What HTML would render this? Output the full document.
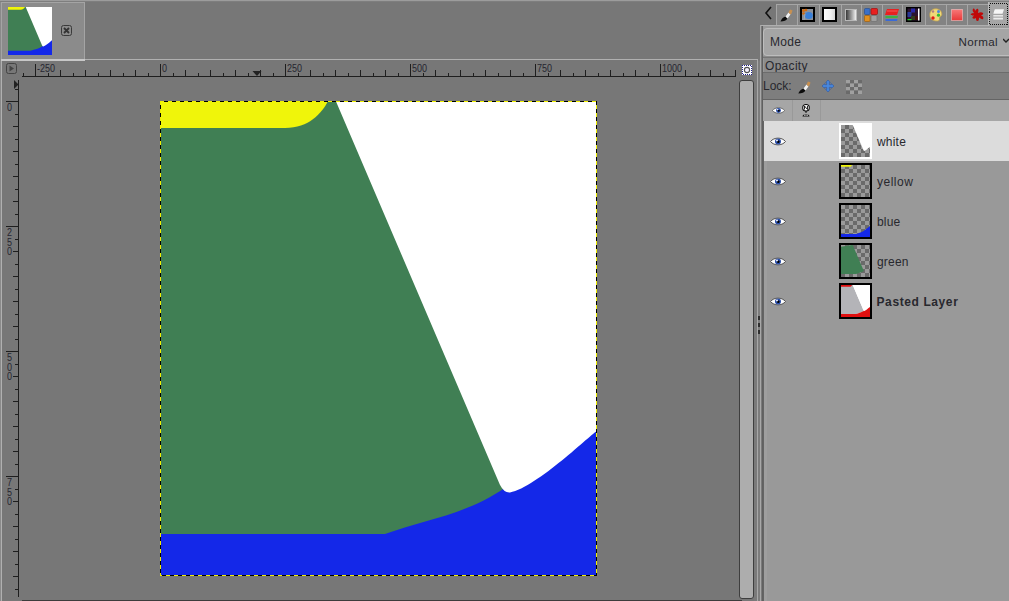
<!DOCTYPE html>
<html><head><meta charset="utf-8">
<style>
*{margin:0;padding:0;box-sizing:border-box}
html,body{width:1009px;height:601px;overflow:hidden;background:#777;font-family:"Liberation Sans",sans-serif}
.a{position:absolute}
.t{position:absolute;color:#28282e;white-space:nowrap;font-size:12px;line-height:14px}
.d{letter-spacing:0.3px}
</style></head><body>
<div class="a" style="left:0;top:0;width:754px;height:1px;background:#9c9c9c"></div>
<div class="a" style="left:0;top:1px;width:754px;height:1px;background:#7e7e7e"></div>
<div class="a" style="left:1px;top:2px;width:84px;height:58px;background:#8b8b8b;border:1px solid #a4a4a4;border-bottom:none"></div>
<div class="a" style="left:1px;top:59px;width:757px;height:1px;background:#b0b0b0"></div>
<div class="a" style="left:1px;top:59px;width:84px;height:2px;background:#c8c8c8"></div>
<div class="a" style="left:0;top:2px;width:1px;height:599px;background:#8a8a8a"></div>
<div class="a" style="left:1px;top:59px;width:1px;height:542px;background:#b0b0b0"></div>
<svg class="a" style="left:8px;top:7px" width="44" height="48" viewBox="0 0 437 475" preserveAspectRatio="none">
<rect width="437" height="475" fill="#407f54"/>
<path d="M0,0 L168,0 C162,12.1 148.9,27 125,27 L0,27 Z" fill="#f0f50a"/>
<path d="M0,433 L225,433 C263.6,419.1 307.7,413.3 346,386 L437,300 L437,475 L0,475 Z" fill="#1428e8"/>
<path d="M175.8,0 L339.9,383.8 Q344,392 350,391.5 C377.3,386.1 432.3,331.8 437,330 L437,0 Z" fill="#fff"/>
</svg>
<svg class="a" style="left:61px;top:25px" width="11" height="11" viewBox="0 0 11 11">
<rect x="0.5" y="0.5" width="10" height="10" rx="2" fill="none" stroke="#3a3a3a" stroke-width="1"/>
<path d="M3,3 L8,8 M8,3 L3,8" stroke="#333" stroke-width="1.8"/></svg>
<svg class="a" style="left:6px;top:63px" width="11" height="11" viewBox="0 0 11 11">
<rect x="0.5" y="0.5" width="10" height="10" rx="2" fill="none" stroke="#444" stroke-width="1"/>
<path d="M3.5,2.5 L8,5.5 L3.5,8.5 Z" fill="#444"/></svg>
<svg class="a" style="left:0;top:0" width="760" height="90" shape-rendering="crispEdges"><rect x="22" y="76" width="714" height="1" fill="#1e1e1e"/><rect x="23" y="73" width="1" height="3" fill="#1e1e1e"/><rect x="35" y="64" width="1" height="12" fill="#1e1e1e"/><rect x="48" y="73" width="1" height="3" fill="#1e1e1e"/><rect x="60" y="70" width="1" height="6" fill="#1e1e1e"/><rect x="73" y="73" width="1" height="3" fill="#1e1e1e"/><rect x="85" y="70" width="1" height="6" fill="#1e1e1e"/><rect x="98" y="73" width="1" height="3" fill="#1e1e1e"/><rect x="110" y="70" width="1" height="6" fill="#1e1e1e"/><rect x="123" y="73" width="1" height="3" fill="#1e1e1e"/><rect x="135" y="70" width="1" height="6" fill="#1e1e1e"/><rect x="148" y="73" width="1" height="3" fill="#1e1e1e"/><rect x="160" y="64" width="1" height="12" fill="#1e1e1e"/><rect x="173" y="73" width="1" height="3" fill="#1e1e1e"/><rect x="185" y="70" width="1" height="6" fill="#1e1e1e"/><rect x="198" y="73" width="1" height="3" fill="#1e1e1e"/><rect x="210" y="70" width="1" height="6" fill="#1e1e1e"/><rect x="223" y="73" width="1" height="3" fill="#1e1e1e"/><rect x="235" y="70" width="1" height="6" fill="#1e1e1e"/><rect x="248" y="73" width="1" height="3" fill="#1e1e1e"/><rect x="260" y="70" width="1" height="6" fill="#1e1e1e"/><rect x="273" y="73" width="1" height="3" fill="#1e1e1e"/><rect x="285" y="64" width="1" height="12" fill="#1e1e1e"/><rect x="298" y="73" width="1" height="3" fill="#1e1e1e"/><rect x="310" y="70" width="1" height="6" fill="#1e1e1e"/><rect x="323" y="73" width="1" height="3" fill="#1e1e1e"/><rect x="335" y="70" width="1" height="6" fill="#1e1e1e"/><rect x="348" y="73" width="1" height="3" fill="#1e1e1e"/><rect x="360" y="70" width="1" height="6" fill="#1e1e1e"/><rect x="373" y="73" width="1" height="3" fill="#1e1e1e"/><rect x="385" y="70" width="1" height="6" fill="#1e1e1e"/><rect x="398" y="73" width="1" height="3" fill="#1e1e1e"/><rect x="410" y="64" width="1" height="12" fill="#1e1e1e"/><rect x="423" y="73" width="1" height="3" fill="#1e1e1e"/><rect x="435" y="70" width="1" height="6" fill="#1e1e1e"/><rect x="448" y="73" width="1" height="3" fill="#1e1e1e"/><rect x="460" y="70" width="1" height="6" fill="#1e1e1e"/><rect x="473" y="73" width="1" height="3" fill="#1e1e1e"/><rect x="485" y="70" width="1" height="6" fill="#1e1e1e"/><rect x="498" y="73" width="1" height="3" fill="#1e1e1e"/><rect x="510" y="70" width="1" height="6" fill="#1e1e1e"/><rect x="523" y="73" width="1" height="3" fill="#1e1e1e"/><rect x="535" y="64" width="1" height="12" fill="#1e1e1e"/><rect x="548" y="73" width="1" height="3" fill="#1e1e1e"/><rect x="560" y="70" width="1" height="6" fill="#1e1e1e"/><rect x="573" y="73" width="1" height="3" fill="#1e1e1e"/><rect x="585" y="70" width="1" height="6" fill="#1e1e1e"/><rect x="598" y="73" width="1" height="3" fill="#1e1e1e"/><rect x="610" y="70" width="1" height="6" fill="#1e1e1e"/><rect x="623" y="73" width="1" height="3" fill="#1e1e1e"/><rect x="635" y="70" width="1" height="6" fill="#1e1e1e"/><rect x="648" y="73" width="1" height="3" fill="#1e1e1e"/><rect x="660" y="64" width="1" height="12" fill="#1e1e1e"/><rect x="673" y="73" width="1" height="3" fill="#1e1e1e"/><rect x="685" y="70" width="1" height="6" fill="#1e1e1e"/><rect x="698" y="73" width="1" height="3" fill="#1e1e1e"/><rect x="710" y="70" width="1" height="6" fill="#1e1e1e"/><rect x="723" y="73" width="1" height="3" fill="#1e1e1e"/><rect x="735" y="70" width="1" height="6" fill="#1e1e1e"/><rect x="735" y="71" width="1" height="5" fill="#1e1e1e"/><path d="M252.5,71 L261.5,71 L257,76 Z" fill="#222" shape-rendering="auto"/></svg>
<div class="t" style="left:37px;top:63px;font-size:10px;line-height:12px;transform:scaleX(0.9);transform-origin:0 0;color:#262630">-250</div>
<div class="t" style="left:162px;top:63px;font-size:10px;line-height:12px;transform:scaleX(0.9);transform-origin:0 0;color:#262630">0</div>
<div class="t" style="left:287px;top:63px;font-size:10px;line-height:12px;transform:scaleX(0.9);transform-origin:0 0;color:#262630">250</div>
<div class="t" style="left:412px;top:63px;font-size:10px;line-height:12px;transform:scaleX(0.9);transform-origin:0 0;color:#262630">500</div>
<div class="t" style="left:537px;top:63px;font-size:10px;line-height:12px;transform:scaleX(0.9);transform-origin:0 0;color:#262630">750</div>
<div class="t" style="left:662px;top:63px;font-size:10px;line-height:12px;transform:scaleX(0.9);transform-origin:0 0;color:#262630">1000</div>
<svg class="a" style="left:0;top:0" width="22" height="601" shape-rendering="crispEdges"><rect x="18" y="80" width="1" height="517" fill="#1e1e1e"/><rect x="15" y="89" width="3" height="1" fill="#1e1e1e"/><rect x="6" y="101" width="12" height="1" fill="#1e1e1e"/><rect x="15" y="114" width="3" height="1" fill="#1e1e1e"/><rect x="13" y="126" width="5" height="1" fill="#1e1e1e"/><rect x="15" y="139" width="3" height="1" fill="#1e1e1e"/><rect x="13" y="151" width="5" height="1" fill="#1e1e1e"/><rect x="15" y="164" width="3" height="1" fill="#1e1e1e"/><rect x="13" y="176" width="5" height="1" fill="#1e1e1e"/><rect x="15" y="189" width="3" height="1" fill="#1e1e1e"/><rect x="13" y="201" width="5" height="1" fill="#1e1e1e"/><rect x="15" y="214" width="3" height="1" fill="#1e1e1e"/><rect x="6" y="226" width="12" height="1" fill="#1e1e1e"/><rect x="15" y="239" width="3" height="1" fill="#1e1e1e"/><rect x="13" y="251" width="5" height="1" fill="#1e1e1e"/><rect x="15" y="264" width="3" height="1" fill="#1e1e1e"/><rect x="13" y="276" width="5" height="1" fill="#1e1e1e"/><rect x="15" y="289" width="3" height="1" fill="#1e1e1e"/><rect x="13" y="301" width="5" height="1" fill="#1e1e1e"/><rect x="15" y="314" width="3" height="1" fill="#1e1e1e"/><rect x="13" y="326" width="5" height="1" fill="#1e1e1e"/><rect x="15" y="339" width="3" height="1" fill="#1e1e1e"/><rect x="6" y="351" width="12" height="1" fill="#1e1e1e"/><rect x="15" y="364" width="3" height="1" fill="#1e1e1e"/><rect x="13" y="376" width="5" height="1" fill="#1e1e1e"/><rect x="15" y="389" width="3" height="1" fill="#1e1e1e"/><rect x="13" y="401" width="5" height="1" fill="#1e1e1e"/><rect x="15" y="414" width="3" height="1" fill="#1e1e1e"/><rect x="13" y="426" width="5" height="1" fill="#1e1e1e"/><rect x="15" y="439" width="3" height="1" fill="#1e1e1e"/><rect x="13" y="451" width="5" height="1" fill="#1e1e1e"/><rect x="15" y="464" width="3" height="1" fill="#1e1e1e"/><rect x="6" y="476" width="12" height="1" fill="#1e1e1e"/><rect x="15" y="489" width="3" height="1" fill="#1e1e1e"/><rect x="13" y="501" width="5" height="1" fill="#1e1e1e"/><rect x="15" y="514" width="3" height="1" fill="#1e1e1e"/><rect x="13" y="526" width="5" height="1" fill="#1e1e1e"/><rect x="15" y="539" width="3" height="1" fill="#1e1e1e"/><rect x="13" y="551" width="5" height="1" fill="#1e1e1e"/><rect x="15" y="564" width="3" height="1" fill="#1e1e1e"/><rect x="13" y="576" width="5" height="1" fill="#1e1e1e"/><rect x="15" y="589" width="3" height="1" fill="#1e1e1e"/><path d="M14,80 L18.5,84.5 L14,89 Z" fill="#222" shape-rendering="auto"/></svg>
<div class="t" style="left:7px;top:102.0px;font-size:10px;line-height:12px;transform:scaleX(0.9);transform-origin:0 0;color:#262630">0</div>
<div class="t" style="left:7px;top:227.0px;font-size:10px;line-height:12px;transform:scaleX(0.9);transform-origin:0 0;color:#262630">2</div>
<div class="t" style="left:7px;top:236.5px;font-size:10px;line-height:12px;transform:scaleX(0.9);transform-origin:0 0;color:#262630">5</div>
<div class="t" style="left:7px;top:246.0px;font-size:10px;line-height:12px;transform:scaleX(0.9);transform-origin:0 0;color:#262630">0</div>
<div class="t" style="left:7px;top:352.0px;font-size:10px;line-height:12px;transform:scaleX(0.9);transform-origin:0 0;color:#262630">5</div>
<div class="t" style="left:7px;top:361.5px;font-size:10px;line-height:12px;transform:scaleX(0.9);transform-origin:0 0;color:#262630">0</div>
<div class="t" style="left:7px;top:371.0px;font-size:10px;line-height:12px;transform:scaleX(0.9);transform-origin:0 0;color:#262630">0</div>
<div class="t" style="left:7px;top:477.0px;font-size:10px;line-height:12px;transform:scaleX(0.9);transform-origin:0 0;color:#262630">7</div>
<div class="t" style="left:7px;top:486.5px;font-size:10px;line-height:12px;transform:scaleX(0.9);transform-origin:0 0;color:#262630">5</div>
<div class="t" style="left:7px;top:496.0px;font-size:10px;line-height:12px;transform:scaleX(0.9);transform-origin:0 0;color:#262630">0</div>
<svg class="a" style="left:160px;top:101px" width="437" height="475" viewBox="0 0 437 475">
<rect width="437" height="475" fill="#407f54"/>
<path d="M0,0 L168,0 C162,12.1 148.9,27 125,27 L0,27 Z" fill="#f0f50a"/>
<path d="M0,433 L225,433 C263.6,419.1 307.7,413.3 346,386 L437,300 L437,475 L0,475 Z" fill="#1428e8"/>
<path d="M175.8,0 L339.9,383.8 Q344,392 350,391.5 C377.3,386.1 432.3,331.8 437,330 L437,0 Z" fill="#fff"/>
<g shape-rendering="crispEdges"><rect x="0" y="0" width="437" height="1" fill="#f0f000"/><rect x="0" y="474" width="437" height="1" fill="#f0f000"/><rect x="0" y="0" width="1" height="475" fill="#f0f000"/><rect x="436" y="0" width="1" height="475" fill="#f0f000"/><rect x="4" y="0" width="4" height="1" fill="#000"/><rect x="12" y="0" width="4" height="1" fill="#000"/><rect x="20" y="0" width="4" height="1" fill="#000"/><rect x="28" y="0" width="4" height="1" fill="#000"/><rect x="36" y="0" width="4" height="1" fill="#000"/><rect x="44" y="0" width="4" height="1" fill="#000"/><rect x="52" y="0" width="4" height="1" fill="#000"/><rect x="60" y="0" width="4" height="1" fill="#000"/><rect x="68" y="0" width="4" height="1" fill="#000"/><rect x="76" y="0" width="4" height="1" fill="#000"/><rect x="84" y="0" width="4" height="1" fill="#000"/><rect x="92" y="0" width="4" height="1" fill="#000"/><rect x="100" y="0" width="4" height="1" fill="#000"/><rect x="108" y="0" width="4" height="1" fill="#000"/><rect x="116" y="0" width="4" height="1" fill="#000"/><rect x="124" y="0" width="4" height="1" fill="#000"/><rect x="132" y="0" width="4" height="1" fill="#000"/><rect x="140" y="0" width="4" height="1" fill="#000"/><rect x="148" y="0" width="4" height="1" fill="#000"/><rect x="156" y="0" width="4" height="1" fill="#000"/><rect x="164" y="0" width="4" height="1" fill="#000"/><rect x="172" y="0" width="4" height="1" fill="#000"/><rect x="180" y="0" width="4" height="1" fill="#000"/><rect x="188" y="0" width="4" height="1" fill="#000"/><rect x="196" y="0" width="4" height="1" fill="#000"/><rect x="204" y="0" width="4" height="1" fill="#000"/><rect x="212" y="0" width="4" height="1" fill="#000"/><rect x="220" y="0" width="4" height="1" fill="#000"/><rect x="228" y="0" width="4" height="1" fill="#000"/><rect x="236" y="0" width="4" height="1" fill="#000"/><rect x="244" y="0" width="4" height="1" fill="#000"/><rect x="252" y="0" width="4" height="1" fill="#000"/><rect x="260" y="0" width="4" height="1" fill="#000"/><rect x="268" y="0" width="4" height="1" fill="#000"/><rect x="276" y="0" width="4" height="1" fill="#000"/><rect x="284" y="0" width="4" height="1" fill="#000"/><rect x="292" y="0" width="4" height="1" fill="#000"/><rect x="300" y="0" width="4" height="1" fill="#000"/><rect x="308" y="0" width="4" height="1" fill="#000"/><rect x="316" y="0" width="4" height="1" fill="#000"/><rect x="324" y="0" width="4" height="1" fill="#000"/><rect x="332" y="0" width="4" height="1" fill="#000"/><rect x="340" y="0" width="4" height="1" fill="#000"/><rect x="348" y="0" width="4" height="1" fill="#000"/><rect x="356" y="0" width="4" height="1" fill="#000"/><rect x="364" y="0" width="4" height="1" fill="#000"/><rect x="372" y="0" width="4" height="1" fill="#000"/><rect x="380" y="0" width="4" height="1" fill="#000"/><rect x="388" y="0" width="4" height="1" fill="#000"/><rect x="396" y="0" width="4" height="1" fill="#000"/><rect x="404" y="0" width="4" height="1" fill="#000"/><rect x="412" y="0" width="4" height="1" fill="#000"/><rect x="420" y="0" width="4" height="1" fill="#000"/><rect x="428" y="0" width="4" height="1" fill="#000"/><rect x="436" y="0" width="1" height="1" fill="#000"/><rect x="2" y="474" width="4" height="1" fill="#000"/><rect x="10" y="474" width="4" height="1" fill="#000"/><rect x="18" y="474" width="4" height="1" fill="#000"/><rect x="26" y="474" width="4" height="1" fill="#000"/><rect x="34" y="474" width="4" height="1" fill="#000"/><rect x="42" y="474" width="4" height="1" fill="#000"/><rect x="50" y="474" width="4" height="1" fill="#000"/><rect x="58" y="474" width="4" height="1" fill="#000"/><rect x="66" y="474" width="4" height="1" fill="#000"/><rect x="74" y="474" width="4" height="1" fill="#000"/><rect x="82" y="474" width="4" height="1" fill="#000"/><rect x="90" y="474" width="4" height="1" fill="#000"/><rect x="98" y="474" width="4" height="1" fill="#000"/><rect x="106" y="474" width="4" height="1" fill="#000"/><rect x="114" y="474" width="4" height="1" fill="#000"/><rect x="122" y="474" width="4" height="1" fill="#000"/><rect x="130" y="474" width="4" height="1" fill="#000"/><rect x="138" y="474" width="4" height="1" fill="#000"/><rect x="146" y="474" width="4" height="1" fill="#000"/><rect x="154" y="474" width="4" height="1" fill="#000"/><rect x="162" y="474" width="4" height="1" fill="#000"/><rect x="170" y="474" width="4" height="1" fill="#000"/><rect x="178" y="474" width="4" height="1" fill="#000"/><rect x="186" y="474" width="4" height="1" fill="#000"/><rect x="194" y="474" width="4" height="1" fill="#000"/><rect x="202" y="474" width="4" height="1" fill="#000"/><rect x="210" y="474" width="4" height="1" fill="#000"/><rect x="218" y="474" width="4" height="1" fill="#000"/><rect x="226" y="474" width="4" height="1" fill="#000"/><rect x="234" y="474" width="4" height="1" fill="#000"/><rect x="242" y="474" width="4" height="1" fill="#000"/><rect x="250" y="474" width="4" height="1" fill="#000"/><rect x="258" y="474" width="4" height="1" fill="#000"/><rect x="266" y="474" width="4" height="1" fill="#000"/><rect x="274" y="474" width="4" height="1" fill="#000"/><rect x="282" y="474" width="4" height="1" fill="#000"/><rect x="290" y="474" width="4" height="1" fill="#000"/><rect x="298" y="474" width="4" height="1" fill="#000"/><rect x="306" y="474" width="4" height="1" fill="#000"/><rect x="314" y="474" width="4" height="1" fill="#000"/><rect x="322" y="474" width="4" height="1" fill="#000"/><rect x="330" y="474" width="4" height="1" fill="#000"/><rect x="338" y="474" width="4" height="1" fill="#000"/><rect x="346" y="474" width="4" height="1" fill="#000"/><rect x="354" y="474" width="4" height="1" fill="#000"/><rect x="362" y="474" width="4" height="1" fill="#000"/><rect x="370" y="474" width="4" height="1" fill="#000"/><rect x="378" y="474" width="4" height="1" fill="#000"/><rect x="386" y="474" width="4" height="1" fill="#000"/><rect x="394" y="474" width="4" height="1" fill="#000"/><rect x="402" y="474" width="4" height="1" fill="#000"/><rect x="410" y="474" width="4" height="1" fill="#000"/><rect x="418" y="474" width="4" height="1" fill="#000"/><rect x="426" y="474" width="4" height="1" fill="#000"/><rect x="434" y="474" width="3" height="1" fill="#000"/><rect x="0" y="4" width="1" height="4" fill="#000"/><rect x="0" y="12" width="1" height="4" fill="#000"/><rect x="0" y="20" width="1" height="4" fill="#000"/><rect x="0" y="28" width="1" height="4" fill="#000"/><rect x="0" y="36" width="1" height="4" fill="#000"/><rect x="0" y="44" width="1" height="4" fill="#000"/><rect x="0" y="52" width="1" height="4" fill="#000"/><rect x="0" y="60" width="1" height="4" fill="#000"/><rect x="0" y="68" width="1" height="4" fill="#000"/><rect x="0" y="76" width="1" height="4" fill="#000"/><rect x="0" y="84" width="1" height="4" fill="#000"/><rect x="0" y="92" width="1" height="4" fill="#000"/><rect x="0" y="100" width="1" height="4" fill="#000"/><rect x="0" y="108" width="1" height="4" fill="#000"/><rect x="0" y="116" width="1" height="4" fill="#000"/><rect x="0" y="124" width="1" height="4" fill="#000"/><rect x="0" y="132" width="1" height="4" fill="#000"/><rect x="0" y="140" width="1" height="4" fill="#000"/><rect x="0" y="148" width="1" height="4" fill="#000"/><rect x="0" y="156" width="1" height="4" fill="#000"/><rect x="0" y="164" width="1" height="4" fill="#000"/><rect x="0" y="172" width="1" height="4" fill="#000"/><rect x="0" y="180" width="1" height="4" fill="#000"/><rect x="0" y="188" width="1" height="4" fill="#000"/><rect x="0" y="196" width="1" height="4" fill="#000"/><rect x="0" y="204" width="1" height="4" fill="#000"/><rect x="0" y="212" width="1" height="4" fill="#000"/><rect x="0" y="220" width="1" height="4" fill="#000"/><rect x="0" y="228" width="1" height="4" fill="#000"/><rect x="0" y="236" width="1" height="4" fill="#000"/><rect x="0" y="244" width="1" height="4" fill="#000"/><rect x="0" y="252" width="1" height="4" fill="#000"/><rect x="0" y="260" width="1" height="4" fill="#000"/><rect x="0" y="268" width="1" height="4" fill="#000"/><rect x="0" y="276" width="1" height="4" fill="#000"/><rect x="0" y="284" width="1" height="4" fill="#000"/><rect x="0" y="292" width="1" height="4" fill="#000"/><rect x="0" y="300" width="1" height="4" fill="#000"/><rect x="0" y="308" width="1" height="4" fill="#000"/><rect x="0" y="316" width="1" height="4" fill="#000"/><rect x="0" y="324" width="1" height="4" fill="#000"/><rect x="0" y="332" width="1" height="4" fill="#000"/><rect x="0" y="340" width="1" height="4" fill="#000"/><rect x="0" y="348" width="1" height="4" fill="#000"/><rect x="0" y="356" width="1" height="4" fill="#000"/><rect x="0" y="364" width="1" height="4" fill="#000"/><rect x="0" y="372" width="1" height="4" fill="#000"/><rect x="0" y="380" width="1" height="4" fill="#000"/><rect x="0" y="388" width="1" height="4" fill="#000"/><rect x="0" y="396" width="1" height="4" fill="#000"/><rect x="0" y="404" width="1" height="4" fill="#000"/><rect x="0" y="412" width="1" height="4" fill="#000"/><rect x="0" y="420" width="1" height="4" fill="#000"/><rect x="0" y="428" width="1" height="4" fill="#000"/><rect x="0" y="436" width="1" height="4" fill="#000"/><rect x="0" y="444" width="1" height="4" fill="#000"/><rect x="0" y="452" width="1" height="4" fill="#000"/><rect x="0" y="460" width="1" height="4" fill="#000"/><rect x="0" y="468" width="1" height="4" fill="#000"/><rect x="436" y="0" width="1" height="4" fill="#000"/><rect x="436" y="8" width="1" height="4" fill="#000"/><rect x="436" y="16" width="1" height="4" fill="#000"/><rect x="436" y="24" width="1" height="4" fill="#000"/><rect x="436" y="32" width="1" height="4" fill="#000"/><rect x="436" y="40" width="1" height="4" fill="#000"/><rect x="436" y="48" width="1" height="4" fill="#000"/><rect x="436" y="56" width="1" height="4" fill="#000"/><rect x="436" y="64" width="1" height="4" fill="#000"/><rect x="436" y="72" width="1" height="4" fill="#000"/><rect x="436" y="80" width="1" height="4" fill="#000"/><rect x="436" y="88" width="1" height="4" fill="#000"/><rect x="436" y="96" width="1" height="4" fill="#000"/><rect x="436" y="104" width="1" height="4" fill="#000"/><rect x="436" y="112" width="1" height="4" fill="#000"/><rect x="436" y="120" width="1" height="4" fill="#000"/><rect x="436" y="128" width="1" height="4" fill="#000"/><rect x="436" y="136" width="1" height="4" fill="#000"/><rect x="436" y="144" width="1" height="4" fill="#000"/><rect x="436" y="152" width="1" height="4" fill="#000"/><rect x="436" y="160" width="1" height="4" fill="#000"/><rect x="436" y="168" width="1" height="4" fill="#000"/><rect x="436" y="176" width="1" height="4" fill="#000"/><rect x="436" y="184" width="1" height="4" fill="#000"/><rect x="436" y="192" width="1" height="4" fill="#000"/><rect x="436" y="200" width="1" height="4" fill="#000"/><rect x="436" y="208" width="1" height="4" fill="#000"/><rect x="436" y="216" width="1" height="4" fill="#000"/><rect x="436" y="224" width="1" height="4" fill="#000"/><rect x="436" y="232" width="1" height="4" fill="#000"/><rect x="436" y="240" width="1" height="4" fill="#000"/><rect x="436" y="248" width="1" height="4" fill="#000"/><rect x="436" y="256" width="1" height="4" fill="#000"/><rect x="436" y="264" width="1" height="4" fill="#000"/><rect x="436" y="272" width="1" height="4" fill="#000"/><rect x="436" y="280" width="1" height="4" fill="#000"/><rect x="436" y="288" width="1" height="4" fill="#000"/><rect x="436" y="296" width="1" height="4" fill="#000"/><rect x="436" y="304" width="1" height="4" fill="#000"/><rect x="436" y="312" width="1" height="4" fill="#000"/><rect x="436" y="320" width="1" height="4" fill="#000"/><rect x="436" y="328" width="1" height="4" fill="#000"/><rect x="436" y="336" width="1" height="4" fill="#000"/><rect x="436" y="344" width="1" height="4" fill="#000"/><rect x="436" y="352" width="1" height="4" fill="#000"/><rect x="436" y="360" width="1" height="4" fill="#000"/><rect x="436" y="368" width="1" height="4" fill="#000"/><rect x="436" y="376" width="1" height="4" fill="#000"/><rect x="436" y="384" width="1" height="4" fill="#000"/><rect x="436" y="392" width="1" height="4" fill="#000"/><rect x="436" y="400" width="1" height="4" fill="#000"/><rect x="436" y="408" width="1" height="4" fill="#000"/><rect x="436" y="416" width="1" height="4" fill="#000"/><rect x="436" y="424" width="1" height="4" fill="#000"/><rect x="436" y="432" width="1" height="4" fill="#000"/><rect x="436" y="440" width="1" height="4" fill="#000"/><rect x="436" y="448" width="1" height="4" fill="#000"/><rect x="436" y="456" width="1" height="4" fill="#000"/><rect x="436" y="464" width="1" height="4" fill="#000"/><rect x="436" y="472" width="1" height="3" fill="#000"/></g></svg>
<div class="a" style="left:22px;top:600px;width:720px;height:1px;background:#3c3c3c"></div>
<div class="a" style="left:739px;top:80px;width:15px;height:519px;background:#adadad;border:1px solid #3e3e3e;border-radius:3px"></div>
<svg class="a" style="left:742px;top:65px" width="10" height="10" viewBox="0 0 10 10" shape-rendering="crispEdges"><rect width="10" height="10" fill="#fff"/><rect x="0" y="0" width="1" height="1" fill="#20208a"/><rect x="0" y="0" width="1" height="1" fill="#20208a"/><rect x="1" y="9" width="1" height="1" fill="#20208a"/><rect x="9" y="1" width="1" height="1" fill="#20208a"/><rect x="2" y="0" width="1" height="1" fill="#20208a"/><rect x="0" y="2" width="1" height="1" fill="#20208a"/><rect x="3" y="9" width="1" height="1" fill="#20208a"/><rect x="9" y="3" width="1" height="1" fill="#20208a"/><rect x="4" y="0" width="1" height="1" fill="#20208a"/><rect x="0" y="4" width="1" height="1" fill="#20208a"/><rect x="5" y="9" width="1" height="1" fill="#20208a"/><rect x="9" y="5" width="1" height="1" fill="#20208a"/><rect x="6" y="0" width="1" height="1" fill="#20208a"/><rect x="0" y="6" width="1" height="1" fill="#20208a"/><rect x="7" y="9" width="1" height="1" fill="#20208a"/><rect x="9" y="7" width="1" height="1" fill="#20208a"/><rect x="8" y="0" width="1" height="1" fill="#20208a"/><rect x="0" y="8" width="1" height="1" fill="#20208a"/><rect x="9" y="9" width="1" height="1" fill="#20208a"/><rect x="9" y="9" width="1" height="1" fill="#20208a"/></svg>
<svg class="a" style="left:742px;top:65px" width="10" height="10" viewBox="0 0 10 10"><circle cx="5" cy="5" r="2.6" fill="#f4f0ff" stroke="#505050" stroke-width="1.1"/></svg>
<div class="a" style="left:754px;top:61px;width:3px;height:540px;background:#7a7a7a"></div>
<div class="a" style="left:757px;top:59px;width:1px;height:542px;background:#a8a8a8"></div>
<div class="a" style="left:758px;top:61px;width:2px;height:540px;background:#7c7c7c"></div>
<div class="a" style="left:760px;top:25px;width:1px;height:576px;background:#a8a8a8"></div>
<div class="a" style="left:761px;top:26px;width:2px;height:575px;background:#7a7a7a"></div>
<div class="a" style="left:758px;top:316px;width:2px;height:4px;background:#2e2e2e"></div>
<div class="a" style="left:758px;top:323px;width:2px;height:4px;background:#2e2e2e"></div>
<div class="a" style="left:758px;top:330px;width:2px;height:4px;background:#2e2e2e"></div>
<div class="a" style="left:1px;top:59px;width:757px;height:1px;background:#b0b0b0"></div>
<div class="a" style="left:1px;top:59px;width:84px;height:2px;background:#c8c8c8"></div>
<div class="a" style="left:763px;top:0;width:246px;height:601px;background:#999"></div>
<div class="a" style="left:754px;top:0;width:255px;height:25px;background:#777"></div>
<div class="a" style="left:754px;top:0;width:255px;height:1px;background:#9c9c9c"></div>
<div class="a" style="left:754px;top:1px;width:255px;height:1px;background:#7e7e7e"></div>
<div class="a" style="left:776px;top:4px;width:233px;height:21px;background:#838383"></div>
<div class="a" style="left:760px;top:25px;width:249px;height:1px;background:#b0b0b0"></div>
<div class="a" style="left:761px;top:26px;width:2px;height:575px;background:#7a7a7a"></div>
<div class="a" style="left:762px;top:26px;width:1px;height:575px;background:#606060"></div>
<div class="a" style="left:763px;top:121px;width:1px;height:480px;background:#646464"></div>
<div class="a" style="left:764px;top:161px;width:3px;height:440px;background:#9e9e9e"></div>
<div class="a" style="left:760px;top:25px;width:1px;height:576px;background:#a8a8a8"></div>
<div class="a" style="left:776px;top:4px;width:1px;height:21px;background:#a6a6a6"></div>
<div class="a" style="left:797px;top:4px;width:1px;height:21px;background:#a6a6a6"></div>
<div class="a" style="left:819px;top:4px;width:1px;height:21px;background:#a6a6a6"></div>
<div class="a" style="left:841px;top:4px;width:1px;height:21px;background:#a6a6a6"></div>
<div class="a" style="left:861px;top:4px;width:1px;height:21px;background:#a6a6a6"></div>
<div class="a" style="left:882px;top:4px;width:1px;height:21px;background:#a6a6a6"></div>
<div class="a" style="left:902px;top:4px;width:1px;height:21px;background:#a6a6a6"></div>
<div class="a" style="left:925px;top:4px;width:1px;height:21px;background:#a6a6a6"></div>
<div class="a" style="left:946px;top:4px;width:1px;height:21px;background:#a6a6a6"></div>
<div class="a" style="left:967px;top:4px;width:1px;height:21px;background:#a6a6a6"></div>
<div class="a" style="left:988px;top:4px;width:1px;height:21px;background:#a6a6a6"></div>
<div class="a" style="left:776px;top:4px;width:233px;height:1px;background:#a6a6a6"></div>
<div class="a" style="left:988px;top:2px;width:21px;height:24px;background:#a6a6a6;border-left:1px solid #bcbcbc"></div>
<svg class="a" style="left:989px;top:3px" width="19" height="22" viewBox="0 0 19 22" shape-rendering="crispEdges"><rect x="0.5" y="0.5" width="18" height="21" fill="none" stroke="#111" stroke-dasharray="1 1"/></svg>
<svg class="a" style="left:764px;top:6px" width="9" height="14" viewBox="0 0 9 14"><path d="M7,1 L2,7 L7,13" fill="none" stroke="#111" stroke-width="1.6"/></svg>
<svg class="a" style="left:780px;top:8px" width="13" height="14" viewBox="0 0 13 14"><path d="M0.5,13.5 C1.5,11 3,9 5.5,8.5 L7.5,10.5 C6.5,12.5 4,13.5 0.5,13.5 Z" fill="#0c0c0c"/><path d="M5.5,8.5 L8.5,4.5 L10.5,6.5 L7.5,10.5 Z" fill="#f0f0f0"/><path d="M8.5,4.5 L10,1.5 L12.5,2.5 L11.5,5.5 L10.5,6.5 Z" fill="#c89050"/></svg>
<svg class="a" style="left:800px;top:7px" width="15" height="15" viewBox="0 0 15 15"><rect x="1" y="1" width="13" height="13" fill="#8c9098" stroke="#000" stroke-width="2"/><circle cx="3.5" cy="3.5" r="1.5" fill="#d06a10"/><circle cx="6" cy="3" r="1.3" fill="#d06a10"/><circle cx="3.5" cy="6.5" r="1.3" fill="#d06a10"/><ellipse cx="8.8" cy="8.5" rx="4" ry="3.6" fill="#3a80d8"/><path d="M5,7 L4,13" stroke="#a0a8b0" stroke-width="1"/></svg>
<svg class="a" style="left:822px;top:7px" width="15" height="15" viewBox="0 0 15 15"><defs><linearGradient id="g3" x1="0" y1="0" x2="1" y2="0"><stop offset="0" stop-color="#fff"/><stop offset="0.6" stop-color="#f0f0f0"/><stop offset="1" stop-color="#d0d0d0"/></linearGradient></defs><rect x="1" y="1" width="13" height="13" fill="url(#g3)" stroke="#000" stroke-width="2"/></svg>
<svg class="a" style="left:845px;top:9px" width="12" height="12" viewBox="0 0 12 12"><defs><linearGradient id="g4"><stop offset="0" stop-color="#303030"/><stop offset="1" stop-color="#fafafa"/></linearGradient></defs><rect x="0.5" y="0.5" width="11" height="11" fill="url(#g4)" stroke="#b8b8b8"/></svg>
<svg class="a" style="left:864px;top:8px" width="14" height="14" viewBox="0 0 14 14"><rect x="0.5" y="0.5" width="5.5" height="6" rx="1" fill="#3a70c8" stroke="#2a5090" stroke-width="0.7"/><rect x="7" y="0.5" width="6.5" height="6" rx="1" fill="#e82020" stroke="#a01010" stroke-width="0.7"/><rect x="0.5" y="7.5" width="5.5" height="6" rx="1" fill="#e09020" stroke="#a06010" stroke-width="0.7"/><rect x="7" y="7.5" width="6" height="6" rx="1" fill="#a0a0a0" stroke="#707070" stroke-width="0.7"/></svg>
<svg class="a" style="left:884px;top:8px" width="15" height="14" viewBox="0 0 15 14"><path d="M1.5,11 L13.5,11 L13,13 L1.5,13 Z" fill="#3a6ad8"/><path d="M1.5,8 L14,8 L13.5,10 L1.5,10 Z" fill="#40b040"/><path d="M3,1 L15,1 L13,7 L1,7 Z" fill="#e82020"/><path d="M3,3 L13.5,3" stroke="#ff8080" stroke-width="0.6"/></svg>
<svg class="a" style="left:906px;top:7px" width="15" height="15" viewBox="0 0 15 15"><rect x="0.75" y="0.75" width="13.5" height="13.5" fill="#2a1430" stroke="#000" stroke-width="1.5"/><rect x="5" y="1.5" width="4" height="4" fill="#2a28a8"/><rect x="1.5" y="5" width="4" height="5" fill="#283898"/><rect x="5" y="9" width="4" height="4" fill="#303a20"/><rect x="9" y="9" width="3" height="4" fill="#401010"/><rect x="12" y="1.5" width="1.5" height="12" fill="#fff"/><rect x="1.5" y="12" width="4" height="1.2" fill="#20d020"/></svg>
<svg class="a" style="left:929px;top:8px" width="14" height="14" viewBox="0 0 14 14"><path d="M6,0.8 C10,0.5 13,3 12.8,6.5 C12.7,8.5 10.8,8.2 10.5,9.8 C10.3,11.5 11,12.8 8.5,13 C5,13.3 1,11.5 0.8,7.5 C0.6,3.5 3,1 6,0.8 Z" fill="#f0d878" stroke="#c0a050" stroke-width="0.8"/><circle cx="4" cy="10" r="1.7" fill="#e01818"/><circle cx="9.5" cy="7.2" r="1.6" fill="#30c030"/><circle cx="9.5" cy="3.6" r="1.5" fill="#4a88e0"/><circle cx="4" cy="3.5" r="1.2" fill="#b08080"/></svg>
<svg class="a" style="left:951px;top:9px" width="12" height="12" viewBox="0 0 12 12"><defs><linearGradient id="g9" x1="0" y1="0" x2="0" y2="1"><stop offset="0" stop-color="#f87878"/><stop offset="1" stop-color="#e83838"/></linearGradient></defs><rect x="0.5" y="0.5" width="11" height="11" fill="url(#g9)" stroke="#ffd0d0" stroke-dasharray="1 1"/></svg>
<svg class="a" style="left:970px;top:8px" width="15" height="13" viewBox="0 0 15 13"><path d="M3,1 C4,0 5,1 5,3 C6,2 7,0 8,1 C9,2 8,4 8,5 C10,4 12,4 13,5 C14,6 12,7 11,7.5 C13,8 14,10 13,11 C12,12 10,10 9,9.5 C9,11 9,13 7.5,13 C6,13 6,11 6,10 C5,11 3,11 2.5,10 C2,9 4,8 4,7.5 C2,7.5 0,7 1,6 C1.5,5 3,5.5 4,5 C3,4 2,2 3,1 Z" fill="#c00808"/></svg>
<svg class="a" style="left:993px;top:9px" width="11" height="11" viewBox="0 0 11 11"><path d="M1.8,0.3 L11,0.3 L9.5,4.8 L0.3,4.8 Z" fill="#f6f6f6"/><rect x="0.3" y="6" width="9.7" height="1.6" fill="#e6e6e6"/><rect x="0.3" y="8.7" width="9.7" height="1.8" fill="#ececec"/></svg>
<div class="a" style="left:763px;top:28px;width:250px;height:28px;background:#a5a5a5;border:1px solid #bdbdbd;border-radius:4px"></div>
<div class="t d" style="left:770px;top:35px;font-size:12px">Mode</div>
<div class="t" style="left:958.5px;top:35.3px;font-size:11.6px;letter-spacing:0.35px">Normal</div>
<svg class="a" style="left:1003px;top:38px" width="6" height="6" viewBox="0 0 6 6"><path d="M0,1 L3,4 L6,1" fill="none" stroke="#222" stroke-width="1.4"/></svg>
<div class="a" style="left:763px;top:56px;width:246px;height:1px;background:#8a8a8a"></div>
<div class="a" style="left:763px;top:57px;width:246px;height:1px;background:#747474"></div>
<div class="a" style="left:764px;top:58px;width:245px;height:14px;background:#8c8c8c"></div>
<div class="t d" style="left:765px;top:59px;font-size:12px">Opacity</div>
<div class="a" style="left:763px;top:72px;width:246px;height:28px;background:#7e7e7e"></div>
<div class="a" style="left:763px;top:72px;width:246px;height:1px;background:#6c6c6c"></div>
<div class="t" style="left:763px;top:79px;font-size:12px">Lock:</div>
<svg class="a" style="left:798px;top:81px" width="13" height="13" viewBox="0 0 13 13"><path d="M0.3,12.5 C1.5,10 3,8 5.5,7.5 L7.5,9.5 C6.5,11.5 4,12.5 0.3,12.5 Z" fill="#0c0c0c"/><path d="M5.5,7.5 L8.5,3.5 L10.5,5.5 L7.5,9.5 Z" fill="#f0f0f0"/><path d="M8.5,3.5 L10,0.5 L12.5,1.5 L11.5,4.5 L10.5,5.5 Z" fill="#c89050"/></svg>
<svg class="a" style="left:822px;top:80px" width="12" height="12" viewBox="0 0 12 12"><path d="M6,0 L8.3,2.6 L7.3,2.6 L7.3,4.7 L9.4,4.7 L9.4,3.7 L12,6 L9.4,8.3 L9.4,7.3 L7.3,7.3 L7.3,9.4 L8.3,9.4 L6,12 L3.7,9.4 L4.7,9.4 L4.7,7.3 L2.6,7.3 L2.6,8.3 L0,6 L2.6,3.7 L2.6,4.7 L4.7,4.7 L4.7,2.6 L3.7,2.6 Z" fill="#4a88dc" stroke="#2a58a8" stroke-width="0.6"/></svg>
<svg class="a" style="left:846px;top:80px" width="16" height="14" viewBox="0 0 16 14"><rect x="0" y="0.0" width="4" height="3.5" fill="#a0a0a0"/><rect x="0" y="3.5" width="4" height="3.5" fill="#6a6a6a"/><rect x="0" y="7.0" width="4" height="3.5" fill="#a0a0a0"/><rect x="0" y="10.5" width="4" height="3.5" fill="#6a6a6a"/><rect x="4" y="0.0" width="4" height="3.5" fill="#6a6a6a"/><rect x="4" y="3.5" width="4" height="3.5" fill="#a0a0a0"/><rect x="4" y="7.0" width="4" height="3.5" fill="#6a6a6a"/><rect x="4" y="10.5" width="4" height="3.5" fill="#a0a0a0"/><rect x="8" y="0.0" width="4" height="3.5" fill="#a0a0a0"/><rect x="8" y="3.5" width="4" height="3.5" fill="#6a6a6a"/><rect x="8" y="7.0" width="4" height="3.5" fill="#a0a0a0"/><rect x="8" y="10.5" width="4" height="3.5" fill="#6a6a6a"/><rect x="12" y="0.0" width="4" height="3.5" fill="#6a6a6a"/><rect x="12" y="3.5" width="4" height="3.5" fill="#a0a0a0"/><rect x="12" y="7.0" width="4" height="3.5" fill="#6a6a6a"/><rect x="12" y="10.5" width="4" height="3.5" fill="#a0a0a0"/></svg>
<div class="a" style="left:763px;top:99px;width:246px;height:1px;background:#646464"></div>
<div class="a" style="left:763px;top:100px;width:246px;height:21px;background:#a6a6a6"></div>
<div class="a" style="left:792px;top:100px;width:1px;height:21px;background:#999"></div>
<div class="a" style="left:820px;top:100px;width:1px;height:21px;background:#999"></div>
<svg class="a" style="left:772px;top:106px" width="13" height="9" viewBox="0 0 16 9"><path d="M0.5,4.5 C4,0 12,0 15.5,4.5 C12,9 4,9 0.5,4.5 Z" fill="#fff" stroke="#555" stroke-width="1"/><circle cx="8" cy="4.5" r="3" fill="#2a4ea8"/><circle cx="8.3" cy="4.8" r="1.3" fill="#000"/><circle cx="7" cy="3.4" r="0.9" fill="#fff"/></svg>
<svg class="a" style="left:802px;top:104px" width="8" height="13" viewBox="0 0 8 13"><ellipse cx="4" cy="3.8" rx="3.3" ry="3.3" fill="#fff" stroke="#111" stroke-width="1.1"/><path d="M2.5,5.5 L2.5,2 L5.5,5.5 L5.5,2" fill="none" stroke="#111" stroke-width="0.9"/><rect x="3.5" y="7" width="1" height="2" fill="#111"/><path d="M0.5,12.5 C0.5,9 7.5,9 7.5,12.5 Z" fill="#111"/><path d="M2.5,12 L3,10.5 L4,11.5 L5,10.5 L5.5,12" fill="none" stroke="#fff" stroke-width="0.7"/></svg>
<div class="a" style="left:764px;top:121px;width:245px;height:40px;background:#dcdcdc"></div>
<svg class="a" style="left:770px;top:137px" width="16" height="9" viewBox="0 0 16 9"><path d="M0.5,4.5 C4,0 12,0 15.5,4.5 C12,9 4,9 0.5,4.5 Z" fill="#fff" stroke="#555" stroke-width="1"/><circle cx="8" cy="4.5" r="3" fill="#2a4ea8"/><circle cx="8.3" cy="4.8" r="1.3" fill="#000"/><circle cx="7" cy="3.4" r="0.9" fill="#fff"/></svg>
<svg class="a" style="left:839px;top:123px" width="33" height="36" viewBox="-2 -2 33 36"><rect x="-1" y="-1" width="31" height="34" fill="none" stroke="#ffffff" stroke-width="2"/><svg x="0" y="0" width="29" height="32" viewBox="0 0 29 32" preserveAspectRatio="none" overflow="hidden"><rect x="0" y="0" width="4" height="4" fill="#9a9a9a"/><rect x="4" y="0" width="4" height="4" fill="#6a6a6a"/><rect x="8" y="0" width="4" height="4" fill="#9a9a9a"/><rect x="12" y="0" width="4" height="4" fill="#6a6a6a"/><rect x="16" y="0" width="4" height="4" fill="#9a9a9a"/><rect x="20" y="0" width="4" height="4" fill="#6a6a6a"/><rect x="24" y="0" width="4" height="4" fill="#9a9a9a"/><rect x="28" y="0" width="4" height="4" fill="#6a6a6a"/><rect x="0" y="4" width="4" height="4" fill="#6a6a6a"/><rect x="4" y="4" width="4" height="4" fill="#9a9a9a"/><rect x="8" y="4" width="4" height="4" fill="#6a6a6a"/><rect x="12" y="4" width="4" height="4" fill="#9a9a9a"/><rect x="16" y="4" width="4" height="4" fill="#6a6a6a"/><rect x="20" y="4" width="4" height="4" fill="#9a9a9a"/><rect x="24" y="4" width="4" height="4" fill="#6a6a6a"/><rect x="28" y="4" width="4" height="4" fill="#9a9a9a"/><rect x="0" y="8" width="4" height="4" fill="#9a9a9a"/><rect x="4" y="8" width="4" height="4" fill="#6a6a6a"/><rect x="8" y="8" width="4" height="4" fill="#9a9a9a"/><rect x="12" y="8" width="4" height="4" fill="#6a6a6a"/><rect x="16" y="8" width="4" height="4" fill="#9a9a9a"/><rect x="20" y="8" width="4" height="4" fill="#6a6a6a"/><rect x="24" y="8" width="4" height="4" fill="#9a9a9a"/><rect x="28" y="8" width="4" height="4" fill="#6a6a6a"/><rect x="0" y="12" width="4" height="4" fill="#6a6a6a"/><rect x="4" y="12" width="4" height="4" fill="#9a9a9a"/><rect x="8" y="12" width="4" height="4" fill="#6a6a6a"/><rect x="12" y="12" width="4" height="4" fill="#9a9a9a"/><rect x="16" y="12" width="4" height="4" fill="#6a6a6a"/><rect x="20" y="12" width="4" height="4" fill="#9a9a9a"/><rect x="24" y="12" width="4" height="4" fill="#6a6a6a"/><rect x="28" y="12" width="4" height="4" fill="#9a9a9a"/><rect x="0" y="16" width="4" height="4" fill="#9a9a9a"/><rect x="4" y="16" width="4" height="4" fill="#6a6a6a"/><rect x="8" y="16" width="4" height="4" fill="#9a9a9a"/><rect x="12" y="16" width="4" height="4" fill="#6a6a6a"/><rect x="16" y="16" width="4" height="4" fill="#9a9a9a"/><rect x="20" y="16" width="4" height="4" fill="#6a6a6a"/><rect x="24" y="16" width="4" height="4" fill="#9a9a9a"/><rect x="28" y="16" width="4" height="4" fill="#6a6a6a"/><rect x="0" y="20" width="4" height="4" fill="#6a6a6a"/><rect x="4" y="20" width="4" height="4" fill="#9a9a9a"/><rect x="8" y="20" width="4" height="4" fill="#6a6a6a"/><rect x="12" y="20" width="4" height="4" fill="#9a9a9a"/><rect x="16" y="20" width="4" height="4" fill="#6a6a6a"/><rect x="20" y="20" width="4" height="4" fill="#9a9a9a"/><rect x="24" y="20" width="4" height="4" fill="#6a6a6a"/><rect x="28" y="20" width="4" height="4" fill="#9a9a9a"/><rect x="0" y="24" width="4" height="4" fill="#9a9a9a"/><rect x="4" y="24" width="4" height="4" fill="#6a6a6a"/><rect x="8" y="24" width="4" height="4" fill="#9a9a9a"/><rect x="12" y="24" width="4" height="4" fill="#6a6a6a"/><rect x="16" y="24" width="4" height="4" fill="#9a9a9a"/><rect x="20" y="24" width="4" height="4" fill="#6a6a6a"/><rect x="24" y="24" width="4" height="4" fill="#9a9a9a"/><rect x="28" y="24" width="4" height="4" fill="#6a6a6a"/><rect x="0" y="28" width="4" height="4" fill="#6a6a6a"/><rect x="4" y="28" width="4" height="4" fill="#9a9a9a"/><rect x="8" y="28" width="4" height="4" fill="#6a6a6a"/><rect x="12" y="28" width="4" height="4" fill="#9a9a9a"/><rect x="16" y="28" width="4" height="4" fill="#6a6a6a"/><rect x="20" y="28" width="4" height="4" fill="#9a9a9a"/><rect x="24" y="28" width="4" height="4" fill="#6a6a6a"/><rect x="28" y="28" width="4" height="4" fill="#9a9a9a"/><path d="M11.7,0 L22.6,25.6 Q23,26 23.5,26 C25,25 27,23.5 29,22 L29,0 Z" fill="#fff"/></svg></svg>
<div class="t" style="left:877px;top:134.5px;font-size:12px;letter-spacing:0.2px">white</div>
<svg class="a" style="left:770px;top:177px" width="16" height="9" viewBox="0 0 16 9"><path d="M0.5,4.5 C4,0 12,0 15.5,4.5 C12,9 4,9 0.5,4.5 Z" fill="#fff" stroke="#555" stroke-width="1"/><circle cx="8" cy="4.5" r="3" fill="#2a4ea8"/><circle cx="8.3" cy="4.8" r="1.3" fill="#000"/><circle cx="7" cy="3.4" r="0.9" fill="#fff"/></svg>
<svg class="a" style="left:839px;top:163px" width="33" height="36" viewBox="-2 -2 33 36"><rect x="-1" y="-1" width="31" height="34" fill="none" stroke="#000000" stroke-width="2"/><svg x="0" y="0" width="29" height="32" viewBox="0 0 29 32" preserveAspectRatio="none" overflow="hidden"><rect x="0" y="0" width="4" height="4" fill="#9a9a9a"/><rect x="4" y="0" width="4" height="4" fill="#6a6a6a"/><rect x="8" y="0" width="4" height="4" fill="#9a9a9a"/><rect x="12" y="0" width="4" height="4" fill="#6a6a6a"/><rect x="16" y="0" width="4" height="4" fill="#9a9a9a"/><rect x="20" y="0" width="4" height="4" fill="#6a6a6a"/><rect x="24" y="0" width="4" height="4" fill="#9a9a9a"/><rect x="28" y="0" width="4" height="4" fill="#6a6a6a"/><rect x="0" y="4" width="4" height="4" fill="#6a6a6a"/><rect x="4" y="4" width="4" height="4" fill="#9a9a9a"/><rect x="8" y="4" width="4" height="4" fill="#6a6a6a"/><rect x="12" y="4" width="4" height="4" fill="#9a9a9a"/><rect x="16" y="4" width="4" height="4" fill="#6a6a6a"/><rect x="20" y="4" width="4" height="4" fill="#9a9a9a"/><rect x="24" y="4" width="4" height="4" fill="#6a6a6a"/><rect x="28" y="4" width="4" height="4" fill="#9a9a9a"/><rect x="0" y="8" width="4" height="4" fill="#9a9a9a"/><rect x="4" y="8" width="4" height="4" fill="#6a6a6a"/><rect x="8" y="8" width="4" height="4" fill="#9a9a9a"/><rect x="12" y="8" width="4" height="4" fill="#6a6a6a"/><rect x="16" y="8" width="4" height="4" fill="#9a9a9a"/><rect x="20" y="8" width="4" height="4" fill="#6a6a6a"/><rect x="24" y="8" width="4" height="4" fill="#9a9a9a"/><rect x="28" y="8" width="4" height="4" fill="#6a6a6a"/><rect x="0" y="12" width="4" height="4" fill="#6a6a6a"/><rect x="4" y="12" width="4" height="4" fill="#9a9a9a"/><rect x="8" y="12" width="4" height="4" fill="#6a6a6a"/><rect x="12" y="12" width="4" height="4" fill="#9a9a9a"/><rect x="16" y="12" width="4" height="4" fill="#6a6a6a"/><rect x="20" y="12" width="4" height="4" fill="#9a9a9a"/><rect x="24" y="12" width="4" height="4" fill="#6a6a6a"/><rect x="28" y="12" width="4" height="4" fill="#9a9a9a"/><rect x="0" y="16" width="4" height="4" fill="#9a9a9a"/><rect x="4" y="16" width="4" height="4" fill="#6a6a6a"/><rect x="8" y="16" width="4" height="4" fill="#9a9a9a"/><rect x="12" y="16" width="4" height="4" fill="#6a6a6a"/><rect x="16" y="16" width="4" height="4" fill="#9a9a9a"/><rect x="20" y="16" width="4" height="4" fill="#6a6a6a"/><rect x="24" y="16" width="4" height="4" fill="#9a9a9a"/><rect x="28" y="16" width="4" height="4" fill="#6a6a6a"/><rect x="0" y="20" width="4" height="4" fill="#6a6a6a"/><rect x="4" y="20" width="4" height="4" fill="#9a9a9a"/><rect x="8" y="20" width="4" height="4" fill="#6a6a6a"/><rect x="12" y="20" width="4" height="4" fill="#9a9a9a"/><rect x="16" y="20" width="4" height="4" fill="#6a6a6a"/><rect x="20" y="20" width="4" height="4" fill="#9a9a9a"/><rect x="24" y="20" width="4" height="4" fill="#6a6a6a"/><rect x="28" y="20" width="4" height="4" fill="#9a9a9a"/><rect x="0" y="24" width="4" height="4" fill="#9a9a9a"/><rect x="4" y="24" width="4" height="4" fill="#6a6a6a"/><rect x="8" y="24" width="4" height="4" fill="#9a9a9a"/><rect x="12" y="24" width="4" height="4" fill="#6a6a6a"/><rect x="16" y="24" width="4" height="4" fill="#9a9a9a"/><rect x="20" y="24" width="4" height="4" fill="#6a6a6a"/><rect x="24" y="24" width="4" height="4" fill="#9a9a9a"/><rect x="28" y="24" width="4" height="4" fill="#6a6a6a"/><rect x="0" y="28" width="4" height="4" fill="#6a6a6a"/><rect x="4" y="28" width="4" height="4" fill="#9a9a9a"/><rect x="8" y="28" width="4" height="4" fill="#6a6a6a"/><rect x="12" y="28" width="4" height="4" fill="#9a9a9a"/><rect x="16" y="28" width="4" height="4" fill="#6a6a6a"/><rect x="20" y="28" width="4" height="4" fill="#9a9a9a"/><rect x="24" y="28" width="4" height="4" fill="#6a6a6a"/><rect x="28" y="28" width="4" height="4" fill="#9a9a9a"/><path d="M0,0 L11,0 C10.5,1 10,1.8 8.3,1.8 L0,1.8 Z" fill="#f0f50a"/></svg></svg>
<div class="t" style="left:877px;top:174.5px;font-size:12px;letter-spacing:0.5px">yellow</div>
<svg class="a" style="left:770px;top:217px" width="16" height="9" viewBox="0 0 16 9"><path d="M0.5,4.5 C4,0 12,0 15.5,4.5 C12,9 4,9 0.5,4.5 Z" fill="#fff" stroke="#555" stroke-width="1"/><circle cx="8" cy="4.5" r="3" fill="#2a4ea8"/><circle cx="8.3" cy="4.8" r="1.3" fill="#000"/><circle cx="7" cy="3.4" r="0.9" fill="#fff"/></svg>
<svg class="a" style="left:839px;top:203px" width="33" height="36" viewBox="-2 -2 33 36"><rect x="-1" y="-1" width="31" height="34" fill="none" stroke="#000000" stroke-width="2"/><svg x="0" y="0" width="29" height="32" viewBox="0 0 29 32" preserveAspectRatio="none" overflow="hidden"><rect x="0" y="0" width="4" height="4" fill="#9a9a9a"/><rect x="4" y="0" width="4" height="4" fill="#6a6a6a"/><rect x="8" y="0" width="4" height="4" fill="#9a9a9a"/><rect x="12" y="0" width="4" height="4" fill="#6a6a6a"/><rect x="16" y="0" width="4" height="4" fill="#9a9a9a"/><rect x="20" y="0" width="4" height="4" fill="#6a6a6a"/><rect x="24" y="0" width="4" height="4" fill="#9a9a9a"/><rect x="28" y="0" width="4" height="4" fill="#6a6a6a"/><rect x="0" y="4" width="4" height="4" fill="#6a6a6a"/><rect x="4" y="4" width="4" height="4" fill="#9a9a9a"/><rect x="8" y="4" width="4" height="4" fill="#6a6a6a"/><rect x="12" y="4" width="4" height="4" fill="#9a9a9a"/><rect x="16" y="4" width="4" height="4" fill="#6a6a6a"/><rect x="20" y="4" width="4" height="4" fill="#9a9a9a"/><rect x="24" y="4" width="4" height="4" fill="#6a6a6a"/><rect x="28" y="4" width="4" height="4" fill="#9a9a9a"/><rect x="0" y="8" width="4" height="4" fill="#9a9a9a"/><rect x="4" y="8" width="4" height="4" fill="#6a6a6a"/><rect x="8" y="8" width="4" height="4" fill="#9a9a9a"/><rect x="12" y="8" width="4" height="4" fill="#6a6a6a"/><rect x="16" y="8" width="4" height="4" fill="#9a9a9a"/><rect x="20" y="8" width="4" height="4" fill="#6a6a6a"/><rect x="24" y="8" width="4" height="4" fill="#9a9a9a"/><rect x="28" y="8" width="4" height="4" fill="#6a6a6a"/><rect x="0" y="12" width="4" height="4" fill="#6a6a6a"/><rect x="4" y="12" width="4" height="4" fill="#9a9a9a"/><rect x="8" y="12" width="4" height="4" fill="#6a6a6a"/><rect x="12" y="12" width="4" height="4" fill="#9a9a9a"/><rect x="16" y="12" width="4" height="4" fill="#6a6a6a"/><rect x="20" y="12" width="4" height="4" fill="#9a9a9a"/><rect x="24" y="12" width="4" height="4" fill="#6a6a6a"/><rect x="28" y="12" width="4" height="4" fill="#9a9a9a"/><rect x="0" y="16" width="4" height="4" fill="#9a9a9a"/><rect x="4" y="16" width="4" height="4" fill="#6a6a6a"/><rect x="8" y="16" width="4" height="4" fill="#9a9a9a"/><rect x="12" y="16" width="4" height="4" fill="#6a6a6a"/><rect x="16" y="16" width="4" height="4" fill="#9a9a9a"/><rect x="20" y="16" width="4" height="4" fill="#6a6a6a"/><rect x="24" y="16" width="4" height="4" fill="#9a9a9a"/><rect x="28" y="16" width="4" height="4" fill="#6a6a6a"/><rect x="0" y="20" width="4" height="4" fill="#6a6a6a"/><rect x="4" y="20" width="4" height="4" fill="#9a9a9a"/><rect x="8" y="20" width="4" height="4" fill="#6a6a6a"/><rect x="12" y="20" width="4" height="4" fill="#9a9a9a"/><rect x="16" y="20" width="4" height="4" fill="#6a6a6a"/><rect x="20" y="20" width="4" height="4" fill="#9a9a9a"/><rect x="24" y="20" width="4" height="4" fill="#6a6a6a"/><rect x="28" y="20" width="4" height="4" fill="#9a9a9a"/><rect x="0" y="24" width="4" height="4" fill="#9a9a9a"/><rect x="4" y="24" width="4" height="4" fill="#6a6a6a"/><rect x="8" y="24" width="4" height="4" fill="#9a9a9a"/><rect x="12" y="24" width="4" height="4" fill="#6a6a6a"/><rect x="16" y="24" width="4" height="4" fill="#9a9a9a"/><rect x="20" y="24" width="4" height="4" fill="#6a6a6a"/><rect x="24" y="24" width="4" height="4" fill="#9a9a9a"/><rect x="28" y="24" width="4" height="4" fill="#6a6a6a"/><rect x="0" y="28" width="4" height="4" fill="#6a6a6a"/><rect x="4" y="28" width="4" height="4" fill="#9a9a9a"/><rect x="8" y="28" width="4" height="4" fill="#6a6a6a"/><rect x="12" y="28" width="4" height="4" fill="#9a9a9a"/><rect x="16" y="28" width="4" height="4" fill="#6a6a6a"/><rect x="20" y="28" width="4" height="4" fill="#9a9a9a"/><rect x="24" y="28" width="4" height="4" fill="#6a6a6a"/><rect x="28" y="28" width="4" height="4" fill="#9a9a9a"/><path d="M0,29 L15,29 C17.3,28.3 20,27.4 22.7,25.9 L29,21 L29,32 L0,32 Z" fill="#1428e8"/></svg></svg>
<div class="t" style="left:877px;top:214.5px;font-size:12px;letter-spacing:0.2px">blue</div>
<svg class="a" style="left:770px;top:257px" width="16" height="9" viewBox="0 0 16 9"><path d="M0.5,4.5 C4,0 12,0 15.5,4.5 C12,9 4,9 0.5,4.5 Z" fill="#fff" stroke="#555" stroke-width="1"/><circle cx="8" cy="4.5" r="3" fill="#2a4ea8"/><circle cx="8.3" cy="4.8" r="1.3" fill="#000"/><circle cx="7" cy="3.4" r="0.9" fill="#fff"/></svg>
<svg class="a" style="left:839px;top:243px" width="33" height="36" viewBox="-2 -2 33 36"><rect x="-1" y="-1" width="31" height="34" fill="none" stroke="#000000" stroke-width="2"/><svg x="0" y="0" width="29" height="32" viewBox="0 0 29 32" preserveAspectRatio="none" overflow="hidden"><rect x="0" y="0" width="4" height="4" fill="#9a9a9a"/><rect x="4" y="0" width="4" height="4" fill="#6a6a6a"/><rect x="8" y="0" width="4" height="4" fill="#9a9a9a"/><rect x="12" y="0" width="4" height="4" fill="#6a6a6a"/><rect x="16" y="0" width="4" height="4" fill="#9a9a9a"/><rect x="20" y="0" width="4" height="4" fill="#6a6a6a"/><rect x="24" y="0" width="4" height="4" fill="#9a9a9a"/><rect x="28" y="0" width="4" height="4" fill="#6a6a6a"/><rect x="0" y="4" width="4" height="4" fill="#6a6a6a"/><rect x="4" y="4" width="4" height="4" fill="#9a9a9a"/><rect x="8" y="4" width="4" height="4" fill="#6a6a6a"/><rect x="12" y="4" width="4" height="4" fill="#9a9a9a"/><rect x="16" y="4" width="4" height="4" fill="#6a6a6a"/><rect x="20" y="4" width="4" height="4" fill="#9a9a9a"/><rect x="24" y="4" width="4" height="4" fill="#6a6a6a"/><rect x="28" y="4" width="4" height="4" fill="#9a9a9a"/><rect x="0" y="8" width="4" height="4" fill="#9a9a9a"/><rect x="4" y="8" width="4" height="4" fill="#6a6a6a"/><rect x="8" y="8" width="4" height="4" fill="#9a9a9a"/><rect x="12" y="8" width="4" height="4" fill="#6a6a6a"/><rect x="16" y="8" width="4" height="4" fill="#9a9a9a"/><rect x="20" y="8" width="4" height="4" fill="#6a6a6a"/><rect x="24" y="8" width="4" height="4" fill="#9a9a9a"/><rect x="28" y="8" width="4" height="4" fill="#6a6a6a"/><rect x="0" y="12" width="4" height="4" fill="#6a6a6a"/><rect x="4" y="12" width="4" height="4" fill="#9a9a9a"/><rect x="8" y="12" width="4" height="4" fill="#6a6a6a"/><rect x="12" y="12" width="4" height="4" fill="#9a9a9a"/><rect x="16" y="12" width="4" height="4" fill="#6a6a6a"/><rect x="20" y="12" width="4" height="4" fill="#9a9a9a"/><rect x="24" y="12" width="4" height="4" fill="#6a6a6a"/><rect x="28" y="12" width="4" height="4" fill="#9a9a9a"/><rect x="0" y="16" width="4" height="4" fill="#9a9a9a"/><rect x="4" y="16" width="4" height="4" fill="#6a6a6a"/><rect x="8" y="16" width="4" height="4" fill="#9a9a9a"/><rect x="12" y="16" width="4" height="4" fill="#6a6a6a"/><rect x="16" y="16" width="4" height="4" fill="#9a9a9a"/><rect x="20" y="16" width="4" height="4" fill="#6a6a6a"/><rect x="24" y="16" width="4" height="4" fill="#9a9a9a"/><rect x="28" y="16" width="4" height="4" fill="#6a6a6a"/><rect x="0" y="20" width="4" height="4" fill="#6a6a6a"/><rect x="4" y="20" width="4" height="4" fill="#9a9a9a"/><rect x="8" y="20" width="4" height="4" fill="#6a6a6a"/><rect x="12" y="20" width="4" height="4" fill="#9a9a9a"/><rect x="16" y="20" width="4" height="4" fill="#6a6a6a"/><rect x="20" y="20" width="4" height="4" fill="#9a9a9a"/><rect x="24" y="20" width="4" height="4" fill="#6a6a6a"/><rect x="28" y="20" width="4" height="4" fill="#9a9a9a"/><rect x="0" y="24" width="4" height="4" fill="#9a9a9a"/><rect x="4" y="24" width="4" height="4" fill="#6a6a6a"/><rect x="8" y="24" width="4" height="4" fill="#9a9a9a"/><rect x="12" y="24" width="4" height="4" fill="#6a6a6a"/><rect x="16" y="24" width="4" height="4" fill="#9a9a9a"/><rect x="20" y="24" width="4" height="4" fill="#6a6a6a"/><rect x="24" y="24" width="4" height="4" fill="#9a9a9a"/><rect x="28" y="24" width="4" height="4" fill="#6a6a6a"/><rect x="0" y="28" width="4" height="4" fill="#6a6a6a"/><rect x="4" y="28" width="4" height="4" fill="#9a9a9a"/><rect x="8" y="28" width="4" height="4" fill="#6a6a6a"/><rect x="12" y="28" width="4" height="4" fill="#9a9a9a"/><rect x="16" y="28" width="4" height="4" fill="#6a6a6a"/><rect x="20" y="28" width="4" height="4" fill="#9a9a9a"/><rect x="24" y="28" width="4" height="4" fill="#6a6a6a"/><rect x="28" y="28" width="4" height="4" fill="#9a9a9a"/><path d="M0,1.8 L11,0 L11.7,0 L22.6,25.6 L23,26 C20,27.4 17.3,28.3 15,29 L0,29 Z" fill="#407f54"/></svg></svg>
<div class="t" style="left:877px;top:254.5px;font-size:12px;letter-spacing:0.2px">green</div>
<svg class="a" style="left:770px;top:297px" width="16" height="9" viewBox="0 0 16 9"><path d="M0.5,4.5 C4,0 12,0 15.5,4.5 C12,9 4,9 0.5,4.5 Z" fill="#fff" stroke="#555" stroke-width="1"/><circle cx="8" cy="4.5" r="3" fill="#2a4ea8"/><circle cx="8.3" cy="4.8" r="1.3" fill="#000"/><circle cx="7" cy="3.4" r="0.9" fill="#fff"/></svg>
<svg class="a" style="left:839px;top:283px" width="33" height="36" viewBox="-2 -2 33 36"><rect x="-1" y="-1" width="31" height="34" fill="none" stroke="#000000" stroke-width="2"/><svg x="0" y="0" width="29" height="32" viewBox="0 0 29 32" preserveAspectRatio="none" overflow="hidden"><rect width="29" height="32" fill="#fff"/><path d="M0,0 L11,0 L11.7,0 L22.6,25.6 Q23,26 23.5,26 C20,27.4 17.3,28.3 15,29 L0,29 Z" fill="#b4b4b8"/><path d="M0,0 L11,0 C10.5,1 10,1.8 8.3,1.8 L0,1.8 Z" fill="#e01010"/><path d="M0,29 L15,29 C17.3,28.3 20,27.4 22.7,25.9 L29,21 L29,32 L0,32 Z" fill="#e01010"/><path d="M11.7,0 L22.6,25.6 Q23,26 23.5,26 C25,25 27,23.5 29,22 L29,0 Z" fill="#fff"/></svg></svg>
<div class="t" style="left:876.5px;top:294.5px;font-weight:bold;font-size:12px;letter-spacing:0.6px">Pasted Layer</div>
</body></html>
